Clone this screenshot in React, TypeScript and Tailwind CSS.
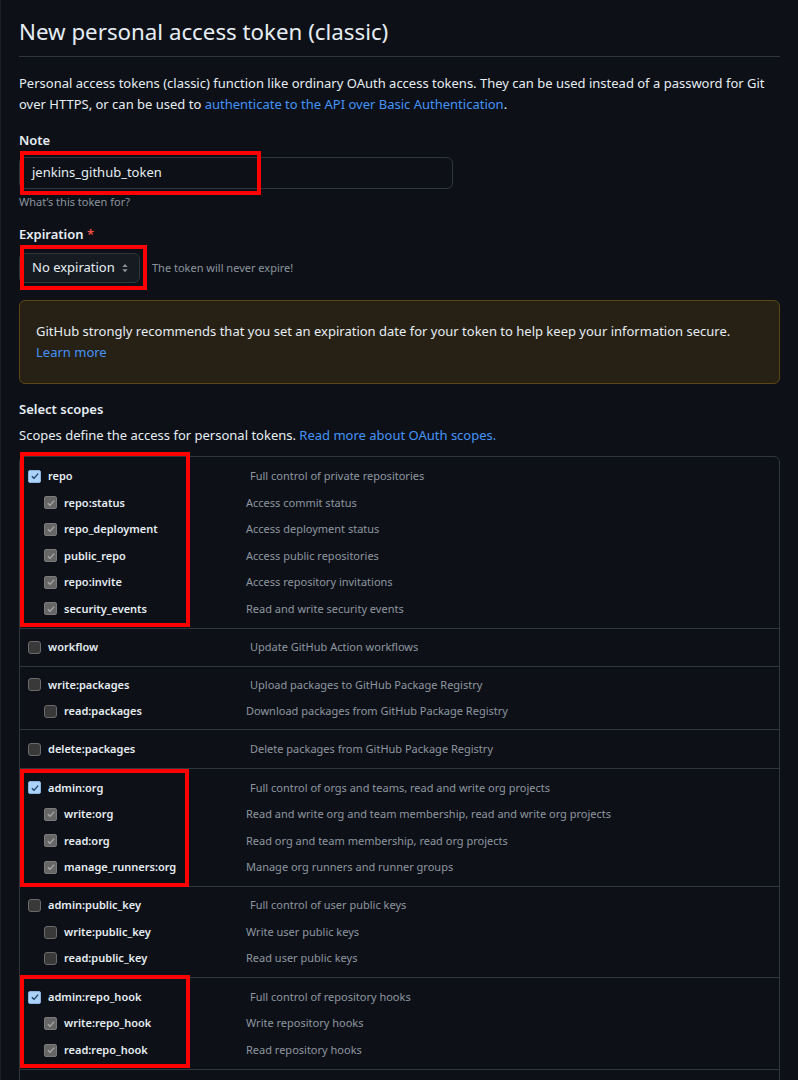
import React from 'react';

type Scope = {
  name: string;
  desc: string;
  h: string;
  checked?: boolean;
  children?: [string, string][];
};

const scopes: Scope[] = [
  {
    name: 'repo',
    desc: 'Full control of private repositories',
    h: 'h-[171px]',
    checked: true,
    children: [
      ['repo:status', 'Access commit status'],
      ['repo_deployment', 'Access deployment status'],
      ['public_repo', 'Access public repositories'],
      ['repo:invite', 'Access repository invitations'],
      ['security_events', 'Read and write security events'],
    ],
  },
  { name: 'workflow', desc: 'Update GitHub Action workflows', h: 'h-[38px]' },
  {
    name: 'write:packages',
    desc: 'Upload packages to GitHub Package Registry',
    h: 'h-[63px]',
    children: [['read:packages', 'Download packages from GitHub Package Registry']],
  },
  { name: 'delete:packages', desc: 'Delete packages from GitHub Package Registry', h: 'h-[39px]' },
  {
    name: 'admin:org',
    desc: 'Full control of orgs and teams, read and write org projects',
    h: 'h-[118px]',
    checked: true,
    children: [
      ['write:org', 'Read and write org and team membership, read and write org projects'],
      ['read:org', 'Read org and team membership, read org projects'],
      ['manage_runners:org', 'Manage org runners and runner groups'],
    ],
  },
  {
    name: 'admin:public_key',
    desc: 'Full control of user public keys',
    h: 'h-[91px]',
    children: [
      ['write:public_key', 'Write user public keys'],
      ['read:public_key', 'Read user public keys'],
    ],
  },
  {
    name: 'admin:repo_hook',
    desc: 'Full control of repository hooks',
    h: 'h-[92px]',
    checked: true,
    children: [
      ['write:repo_hook', 'Write repository hooks'],
      ['read:repo_hook', 'Read repository hooks'],
    ],
  },
];

const Check = ({ color }: { color: string }) => (
  <svg viewBox="0 0 12 12" className="h-[10px] w-[10px]">
    <path d="M2.2 6.3 L4.8 8.8 L9.8 3.2" fill="none" stroke={color} strokeWidth="1.6" />
  </svg>
);

const Box = ({ state }: { state: 'on' | 'dim' | 'off' }) => {
  if (state === 'on')
    return (
      <span className="flex h-[13px] w-[13px] shrink-0 items-center justify-center rounded-[2px] border border-[#8ab3df] bg-[#acd2fa]">
        <Check color="#1c3c62" />
      </span>
    );
  if (state === 'dim')
    return (
      <span className="flex h-[13px] w-[13px] shrink-0 items-center justify-center rounded-[2px] border border-[#7a7a7a] bg-[#666666]">
        <Check color="#a9a9a9" />
      </span>
    );
  return <span className="h-[13px] w-[13px] shrink-0 rounded-[3px] border border-[#6a6a6a] bg-[#393939]" />;
};

const RedBox = ({ className }: { className: string }) => (
  <div className={`pointer-events-none absolute border-[4px] border-[#ff0000] ${className}`} />
);

export default function App() {
  return (
    <div className="relative h-[1080px] overflow-hidden border-l border-[#1c2128] bg-[#0d1117] px-[18px] font-['Segoe_UI','Noto_Sans',sans-serif] text-[#e6edf3]">
      <h1 className="border-b border-[#30363d] pt-[14px] pb-[6px] text-[22.3px] leading-[36px] font-normal">
        New personal access token (classic)
      </h1>

      <p className="mt-[16px] text-[13px] leading-[21px] whitespace-nowrap text-[#e6edf3]">
        Personal access tokens (classic) function like ordinary OAuth access tokens. They can be used instead of a password for Git
        <br />
        over HTTPS, or can be used to{' '}
        <a className="text-[#4493f8]">authenticate to the API over Basic Authentication</a>.
      </p>

      <div className="mt-[15px] text-[13px] leading-[21px] font-semibold">Note</div>
      <div className="mt-[6px] flex h-[32px] w-[434px] items-center rounded-[6px] border border-[#30363d] bg-[#0d1117] px-[12px] text-[13px]">
        jenkins_github_token
      </div>
      <div className="mt-[4px] text-[11px] leading-[18px] text-[#8b949e]">What’s this token for?</div>

      <div className="mt-[13px] text-[13px] leading-[21px] font-semibold">
        Expiration <span className="text-[#f85149]">*</span>
      </div>
      <div className="mt-[8px] flex items-center gap-[12px]">
        <div className="flex h-[30px] w-[121px] items-center justify-between rounded-[6px] border border-[#30363d] bg-[#161b22] pr-[8px] pl-[12px] text-[13px]">
          <span>No expiration</span>
          <svg viewBox="0 0 16 16" className="h-[12px] w-[12px]" fill="#8b949e">
            <path d="M8 2.5 L11.5 6.5 H4.5 Z M8 13.5 L4.5 9.5 H11.5 Z" />
          </svg>
        </div>
        <span className="text-[11px] text-[#8b949e]">The token will never expire!</span>
      </div>

      <div className="mt-[17px] rounded-[6px] border border-[#5c4615] bg-[#272115] px-[16px] py-[20px] text-[13px] leading-[21px]">
        GitHub strongly recommends that you set an expiration date for your token to help keep your information secure.
        <br />
        <a className="text-[#4493f8]">Learn more</a>
      </div>

      <div className="mt-[15px] text-[13px] leading-[21px] font-semibold">Select scopes</div>
      <p className="mt-[5px] text-[13px] leading-[21px]">
        Scopes define the access for personal tokens. <a className="text-[#4493f8]">Read more about OAuth scopes.</a>
      </p>

      <div className="mt-[10px] rounded-t-[6px] border border-[#30363d]">
        {scopes.map((s, i) => (
          <div
            key={s.name}
            className={`flex flex-col justify-center ${s.h} ${i > 0 ? 'border-t border-[#30363d]' : ''}`}
          >
            <div className="flex h-[26.5px] shrink-0 items-center pl-[8px]">
              <div className="flex w-[222px] items-center gap-[7px]">
                <Box state={s.checked ? 'on' : 'off'} />
                <span className="text-[11px] font-semibold text-[#e6edf3]">{s.name}</span>
              </div>
              <span className="text-[11px] text-[#8d96a0]">{s.desc}</span>
            </div>
            {s.children?.map(([name, desc]) => (
              <div key={name} className="flex h-[26.5px] shrink-0 items-center pl-[24px]">
                <div className="flex w-[202px] items-center gap-[7px]">
                  <Box state={s.checked ? 'dim' : 'off'} />
                  <span className="text-[11px] font-semibold text-[#e6edf3]">{name}</span>
                </div>
                <span className="text-[11px] text-[#8d96a0]">{desc}</span>
              </div>
            ))}
          </div>
        ))}
        <div className="h-[40px] border-t border-[#30363d]" />
      </div>

      <RedBox className="top-[151px] left-[19px] h-[44px] w-[241px]" />
      <RedBox className="top-[245px] left-[19px] h-[45px] w-[127px]" />
      <RedBox className="top-[452px] left-[19px] h-[175px] w-[170px]" />
      <RedBox className="top-[769px] left-[19px] h-[118px] w-[169px]" />
      <RedBox className="top-[975px] left-[19px] h-[93px] w-[170px]" />
    </div>
  );
}
